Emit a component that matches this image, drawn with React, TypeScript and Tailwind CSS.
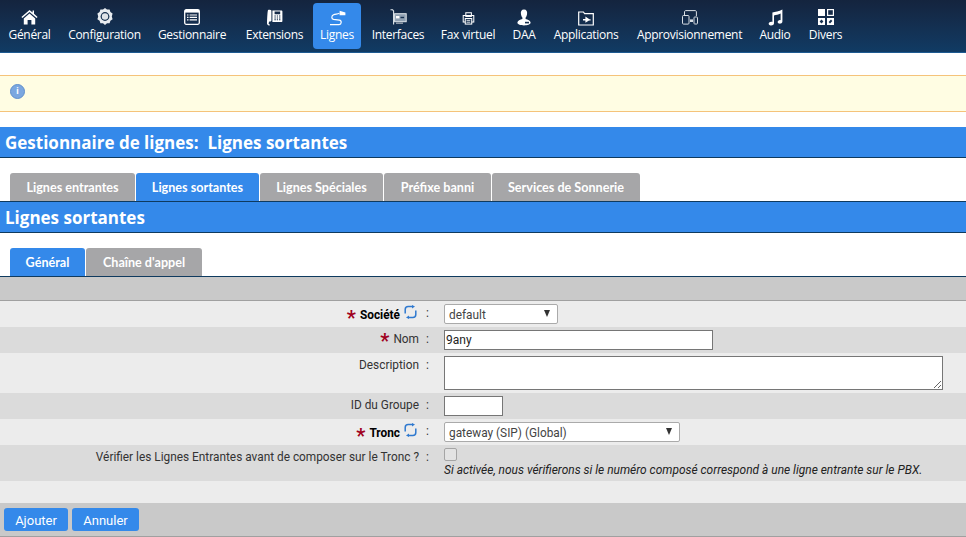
import type { ReactNode } from 'react';

const HomeIcon = () => (
  <svg width="17" height="16" viewBox="0 0 17 16" fill="#fff">
    <path d="M8.5 1 L11.6 3.6 V1.6 H13 V4.8 L16.6 8 L15.6 9 L8.5 3 L1.4 9 L0.4 8 Z" />
    <path d="M2.8 9.4 L8.5 4.6 L14.2 9.4 V15.6 H10.4 V11 H6.6 V15.6 H2.8 Z" />
  </svg>
);

const GearIcon = () => (
  <svg width="16" height="17" viewBox="0 0 16 17" className="-mt-[1px]">
    <path d="M8 0 L10 1.6 L12.6 1.6 L13.4 4 L15.6 5.6 L14.8 8.4 L15.6 11.2 L13.4 12.8 L12.6 15.2 L10 15.2 L8 17 L6 15.2 L3.4 15.2 L2.6 12.8 L0.4 11.2 L1.2 8.4 L0.4 5.6 L2.6 4 L3.4 1.6 L6 1.6 Z" fill="#e8ecf0" />
    <circle cx="8" cy="8.5" r="4.4" fill="#16304f" />
    <circle cx="8" cy="8.5" r="3.2" fill="#dfe3e8" />
  </svg>
);

const ListIcon = () => (
  <svg width="16" height="16" viewBox="0 0 16 16" fill="none">
    <rect x="0.7" y="0.7" width="14.6" height="14.6" rx="1.5" stroke="#fff" strokeWidth="1.3" />
    <rect x="1" y="1" width="14" height="2.6" fill="#fff" />
    <path d="M3 6h1.5M5.6 6h7.4M3 8.4h1.5M5.6 8.4h7.4M3 10.8h1.5M5.6 10.8h7.4" stroke="#fff" strokeWidth="1.2" />
  </svg>
);

const PhoneIcon = () => (
  <svg width="17" height="17" viewBox="0 0 17 17" fill="#fff">
    <path d="M2 1 C3.5 0.4 5 0.7 5.4 1.4 V11.6 C5.4 12.6 3.8 12.8 3.2 12.4 L2.7 14 C2.5 15 3 15.6 4 15.4 L3.6 16.4 C1.6 16.6 0.8 15.2 1 13.8 C1.2 11 1.2 4 2 1 Z" />
    <path fillRule="evenodd" d="M6.4 1.4 H15.4 C16 1.4 16.4 1.8 16.4 2.4 V12 C16.4 12.6 16 13 15.4 13 H6.4 Z M8.6 2.6 V5.2 H14.2 V2.6 Z M8.4 6.4 V7.6 H9.8 V6.4 Z M10.8 6.4 V7.6 H12 V6.4 Z M13 6.4 V7.6 H14.4 V6.4 Z M8.4 8.4 V9.4 H9.8 V8.4 Z M10.8 8.4 V9.4 H12 V8.4 Z M13 8.4 V9.4 H14.4 V8.4 Z M8.4 10.2 V11.2 H9.8 V10.2 Z M10.8 10.2 V11.2 H12 V10.2 Z M13 10.2 V11.2 H14.4 V10.2 Z" />
  </svg>
);

const LinesIcon = () => (
  <svg width="17" height="17" viewBox="0 0 17 17" fill="none">
    <path d="M1 15.6 H10.2 C12.6 15.6 13 11.6 10.4 11.2 L4.6 10.4 C2.2 10 2.2 6.4 4.8 5.6 C6.6 5 8.4 5 10.4 4.2" stroke="#fff" strokeWidth="1.2" />
    <path d="M10.6 1.8 L16.4 3.6 V6.2 H10.6 Z" fill="#fff" />
  </svg>
);

const CardIcon = () => (
  <svg width="17" height="17" viewBox="0 0 17 17" fill="none">
    <path d="M0.5 0.8 H2.6 L3.6 2 V15.5" stroke="#dfe5ea" strokeWidth="1.1" />
    <rect x="4.6" y="4.7" width="11.6" height="8" stroke="#dfe5ea" strokeWidth="1" fill="#8fa0b2" />
    <rect x="6" y="7" width="3.4" height="2.4" fill="#fff" />
    <rect x="10.5" y="7.8" width="3.6" height="1.4" fill="#16304f" />
    <rect x="6" y="13.4" width="7" height="1.6" fill="#8b97a5" />
  </svg>
);

const FaxIcon = () => (
  <svg width="13" height="13" viewBox="0 0 13 14" fill="none" stroke="#fff" strokeWidth="1.1" className="mt-[3px]">
    <rect x="3.6" y="0.8" width="6" height="4" />
    <rect x="0.8" y="3.8" width="11.4" height="7" />
    <rect x="3" y="7" width="7" height="6" fill="#16304f" />
    <path d="M4.4 9h4M4.4 11h4" strokeWidth="0.9" />
  </svg>
);

const UserIcon = () => (
  <svg width="14" height="17" viewBox="0 0 14 17" fill="#fff">
    <path d="M7 0.5 C9.6 0.5 10.6 2.6 10 5.4 C9.7 7 9 8 8.6 8.6 V10 C10.8 10.8 13.4 11.4 13.6 13.6 C13.8 15.6 10 16.4 7 16.4 C4 16.4 0.2 15.6 0.4 13.6 C0.6 11.4 3.2 10.8 5.4 10 V8.6 C5 8 4.3 7 4 5.4 C3.4 2.6 4.4 0.5 7 0.5 Z" />
    <rect x="8" y="12.8" width="4" height="1.6" fill="#16304f" />
  </svg>
);

const FolderIcon = () => (
  <svg width="16" height="15" viewBox="0 0 16 15" fill="none" className="mt-[2px]">
    <path d="M0.7 14 V1 H5.4 L6.6 2.6 H15.3 V14 Z" stroke="#fff" strokeWidth="1.2" />
    <path d="M5 8 H7.4 V5.4 L11.4 8.2 H12.6 V9.6 H5 Z M7.4 9.6 H11 L7.4 11.8 Z" fill="#fff" />
  </svg>
);

const DevicesIcon = () => (
  <svg width="16" height="15" viewBox="0 0 16 15" fill="none" stroke="#d8dee4" strokeWidth="1" className="mt-[1px]">
    <path d="M2.5 5 V2 C2.5 1 3 0.6 4 0.6 H13 C14 0.6 14.4 1 14.4 2 V6" />
    <rect x="0.5" y="5.5" width="6.5" height="8.6" rx="1" />
    <rect x="12" y="7" width="3.5" height="7" rx="0.7" />
    <rect x="8" y="9.4" width="3" height="2.6" fill="#d8dee4" stroke="none" />
  </svg>
);

const MusicIcon = () => (
  <svg width="15" height="17" viewBox="0 0 15 17" fill="#fff">
    <path d="M4.4 3.4 C7 3 11 2.2 14.4 0.4 V12.4 C14.4 14 12.6 14.8 11.2 14.6 C9.6 14.4 9.2 12.8 10.2 11.8 C11 11 12 10.8 12.6 11.2 V4.6 C10.4 5.6 8 6 6 6.4 V14.2 C6 15.8 4.2 16.6 2.6 16.4 C0.6 16.2 0.2 14.6 1.2 13.6 C2.2 12.6 3.4 12.4 4.4 13 Z" />
  </svg>
);

const TilesIcon = () => (
  <svg width="16" height="16" viewBox="0 0 16 16">
    <rect x="0" y="0" width="7" height="7" fill="#fff" />
    <rect x="9.6" y="0.6" width="5.8" height="5.8" fill="none" stroke="#fff" strokeWidth="1.2" />
    <rect x="0" y="9" width="7" height="7" fill="#fff" />
    <rect x="9" y="9" width="7" height="7" fill="#fff" />
    <path d="M3.5 10.6 L5.4 12.5 L3.5 14.4 L1.6 12.5 Z" fill="#16304f" />
    <path d="M10.6 13 L13 10.6 L14.4 12 L12 14.4 Z" fill="#16304f" />
  </svg>
);

const SyncIcon = () => (
  <svg width="13" height="14" viewBox="0 0 13 14" fill="none" className="shrink-0 mr-[2px]">
    <path d="M1.2 8.6 V4.6 C1.2 2.6 2.4 1.6 4.2 1.6 H8.6" stroke="#2f79cf" strokeWidth="1.5" />
    <path d="M8 0 L11 1.6 L8 3.4 Z" fill="#2f79cf" />
    <path d="M11.8 5.4 V9.4 C11.8 11.2 10.6 12.4 8.8 12.4 H4.4" stroke="#2f79cf" strokeWidth="1.5" />
    <path d="M5 10.6 L2 12.4 L5 14 Z" fill="#2f79cf" />
  </svg>
);

const Caret = () => (
  <span className="absolute right-[7px] top-[5px] w-0 h-0 border-x-[3.5px] border-x-transparent border-t-[7px] border-t-[#333]" />
);

const navItems: { label: string; icon: ReactNode; cls: string; active?: boolean }[] = [
  { label: 'Général', icon: <HomeIcon />, cls: 'w-[41px] ml-[9px]' },
  { label: 'Configuration', icon: <GearIcon />, cls: 'w-[73px] ml-[18px]' },
  { label: 'Gestionnaire', icon: <ListIcon />, cls: 'w-[68px] ml-[17px]' },
  { label: 'Extensions', icon: <PhoneIcon />, cls: 'w-[55px] ml-[21px]' },
  { label: 'Lignes', icon: <LinesIcon />, cls: 'w-[48px] ml-[11px]', active: true },
  { label: 'Interfaces', icon: <CardIcon />, cls: 'w-[52px] ml-[11px]' },
  { label: 'Fax virtuel', icon: <FaxIcon />, cls: 'w-[54px] ml-[17px]' },
  { label: 'DAA', icon: <UserIcon />, cls: 'w-[24px] ml-[17px]' },
  { label: 'Applications', icon: <FolderIcon />, cls: 'w-[66px] ml-[17px]' },
  { label: 'Approvisionnement', icon: <DevicesIcon />, cls: 'w-[105px] ml-[18px]' },
  { label: 'Audio', icon: <MusicIcon />, cls: 'w-[32px] ml-[17px]' },
  { label: 'Divers', icon: <TilesIcon />, cls: 'w-[33px] ml-[18px]' },
];

function Tab({ label, active, cls }: { label: string; active?: boolean; cls: string }) {
  return (
    <div
      className={`${cls} h-[28px] pt-[2px] flex items-center justify-center rounded-t-[3px] font-['Lato',sans-serif] text-[12.6px] font-bold text-white whitespace-nowrap ${
        active ? 'bg-[#3489ea]' : 'bg-[#a6a6a8]'
      }`}
    >
      {label}
    </div>
  );
}

function Row({
  label,
  h,
  shade,
  required,
  bold,
  sync,
  children,
}: {
  label: string;
  h: string;
  shade?: boolean;
  required?: boolean;
  bold?: boolean;
  sync?: boolean;
  children: ReactNode;
}) {
  return (
    <div className={`flex ${h} ${shade ? 'bg-[#dbdbdb]' : 'bg-[#ececec]'}`}>
      <div className="w-[419px] flex justify-end items-start gap-[4px] pt-[4px] whitespace-nowrap">
        {required && (
          <span className={`text-[#a00020] text-[20px] leading-[26px] font-bold h-[20px] ${bold ? '' : '-mt-[3px]'}`}>*</span>
        )}
        <span className={`leading-[17px] ${bold ? 'font-bold text-black mt-[2px]' : ''}`}>{label}</span>
        {sync && <SyncIcon />}
      </div>
      <div className="w-[25px] pl-[7px] pt-[4px] leading-[17px]">:</div>
      <div className="flex-1 pt-[3px]">{children}</div>
    </div>
  );
}

export default function App() {
  return (
    <div className="w-[966px] h-[537px] overflow-hidden bg-white text-[11.85px] text-[#333] font-['Roboto','Open_Sans',sans-serif]">
      <div className="h-[53px] flex items-start pt-[3px] bg-gradient-to-b from-[#14243e] to-[#103b64] border-b border-[#1d5a91] text-white text-[12px] font-['Open_Sans',sans-serif]">
        {navItems.map((item) => (
          <div
            key={item.label}
            className={`${item.cls} h-[46px] shrink-0 flex flex-col items-center rounded-[4px] whitespace-nowrap ${
              item.active ? 'bg-[#3489ea]' : ''
            }`}
          >
            <div className="h-[24px] pt-[6px] flex items-start justify-center">{item.icon}</div>
            <span className="leading-[16px] tracking-[-0.3px]">{item.label}</span>
          </div>
        ))}
      </div>

      <div className="mt-[22px] h-[37px] bg-[#fffde3] border-y border-[#f5c37a] flex items-center pl-[10px]">
        <span className="mb-[4px] w-[15px] h-[15px] rounded-full bg-[#7ba7e0] border border-[#5f8fcc] flex items-center justify-center text-white text-[9px] font-bold leading-none">
          i
        </span>
      </div>

      <div className="mt-[15px] h-[31px] pt-[2px] bg-[#3489ea] border-b border-[#0e3a5f] flex items-center pl-[5px] text-white text-[17px] font-bold whitespace-pre font-['Open_Sans',sans-serif]">
        Gestionnaire de lignes:  Lignes sortantes
      </div>

      <div className="mt-[15px] flex gap-[1px] pl-[10px]">
        <Tab label="Lignes entrantes" cls="w-[125px]" />
        <Tab label="Lignes sortantes" active cls="w-[123px]" />
        <Tab label="Lignes Spéciales" cls="w-[123px]" />
        <Tab label="Préfixe banni" cls="w-[107px]" />
        <Tab label="Services de Sonnerie" cls="w-[148px]" />
      </div>

      <div className="h-[32px] pt-[1px] bg-[#3489ea] border-y border-[#0e3a5f] flex items-center pl-[5px] text-white text-[17px] font-bold font-['Open_Sans',sans-serif]">
        Lignes sortantes
      </div>

      <div className="mt-[15px] flex gap-[1px] pl-[10px]">
        <Tab label="Général" active cls="w-[75px]" />
        <Tab label="Chaîne d'appel" cls="w-[116px]" />
      </div>

      <div className="h-[25px] bg-[#c9c9c9] border-y border-[#0e3a5f] border-b-[#a0a0a0]" />

      <Row label="Société" h="h-[26px]" required bold sync>
        <div className="relative w-[114px] h-[20px] bg-white border border-[#aaa] rounded-[2px] pl-[4px] pt-[1px] leading-[18px] text-[#444]">
          default
          <Caret />
        </div>
      </Row>
      <Row label="Nom" h="h-[26px]" shade required>
        <input
          defaultValue="9any"
          className="block w-[269px] h-[20px] bg-white border border-[#767676] px-[1px] text-[12px] text-[#222] outline-none"
        />
      </Row>
      <Row label="Description" h="h-[40px]">
        <textarea className="block w-[499px] h-[34px] bg-white border border-[#767676] outline-none" />
      </Row>
      <Row label="ID du Groupe" h="h-[26px]" shade>
        <input className="block w-[59px] h-[20px] bg-white border border-[#767676] outline-none" />
      </Row>
      <Row label="Tronc" h="h-[26px]" required bold sync>
        <div className="relative w-[236px] h-[20px] bg-white border border-[#aaa] rounded-[2px] pl-[4px] pt-[1px] leading-[18px] text-[#444]">
          gateway (SIP) (Global)
          <Caret />
        </div>
      </Row>
      <Row label="Vérifier les Lignes Entrantes avant de composer sur le Tronc ?" h="h-[36px]" shade>
        <div className="w-[13px] h-[13px] bg-[#e3e3e3] border border-[#a5a5a5] rounded-[2px]" />
        <div className="italic text-[11.95px] leading-[16px] text-[#222] whitespace-nowrap mt-[1px]">
          Si activée, nous vérifierons si le numéro composé correspond à une ligne entrante sur le PBX.
        </div>
      </Row>

      <div className="h-[22px] bg-[#ececec]" />

      <div className="h-[34px] bg-[#c9c9c9] border-b border-[#a0a0a0] flex gap-[4px] pl-[4px] pt-[5px]">
        <button className="w-[64px] h-[23px] pt-[3px] bg-[#3489ea] rounded-[3px] text-white text-[13px]">Ajouter</button>
        <button className="w-[67px] h-[23px] pt-[3px] bg-[#3489ea] rounded-[3px] text-white text-[13px]">Annuler</button>
      </div>
    </div>
  );
}
